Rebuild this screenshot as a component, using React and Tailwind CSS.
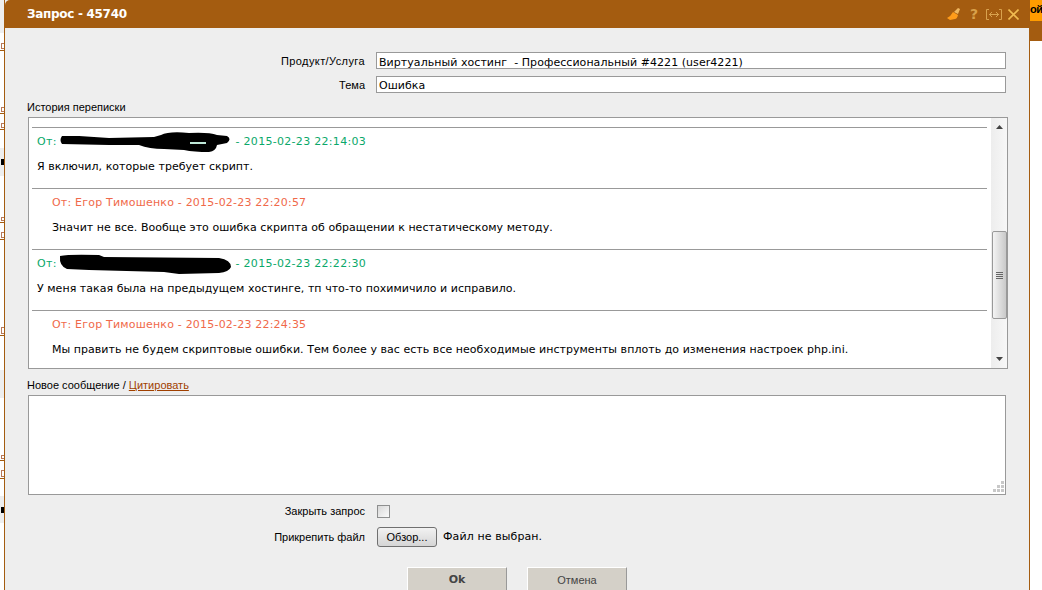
import React from 'react';

const verdana = { fontFamily: '"DejaVu Sans", sans-serif' };

// what peeks out from the page behind the dialog, top to bottom
const behind = [
  ['gray', 33], ['space', 10], ['link', 8], ['space', 56], ['link', 7], ['space', 9], ['link', 7], ['space', 18],
  ['mark', 28], ['space', 41], ['link', 6], ['space', 9], ['link', 8], ['space', 87], ['link', 9], ['space', 34],
  ['gray', 28], ['space', 57], ['link', 6], ['space', 9], ['link', 9], ['space', 17], ['mark', 27],
];

const BehindStrip = () => (
  <div className="w-[4px] shrink-0 flex flex-col">
    {behind.map(([kind, h], i) => {
      if (kind === 'link') {
        return (
          <div key={i} className="border-b border-[#a45c10] flex justify-end pb-[1px]" style={{ height: h }}>
            <span className="w-[3px] border-y border-l border-[#b8795a]" />
          </div>
        );
      }
      if (kind === 'mark') {
        return (
          <div key={i} className="bg-[#eeeeee] flex items-center justify-end" style={{ height: h }}>
            <span className="h-[6px] w-[3px] bg-black" />
          </div>
        );
      }
      return <div key={i} className={kind === 'gray' ? 'bg-[#eeeeee]' : 'bg-white'} style={{ height: h }} />;
    })}
  </div>
);

// scribbled-over sender names
const Scribble1 = () => (
  <svg width="173" height="20" viewBox="0 0 173 20" className="-ml-[1px] mr-[3px] shrink-0">
    <path d="M3 4 Q0 8 3 12 L50 13 L80 13 Q90 17 105 17 L125 18 Q135 20 150 20 Q157 19 158 13 L168 11 Q173 7 168 4 L158 3 Q150 0 130 1 Q110 -1 102 3 L95 5 L50 6 L20 4 Z" fill="#000" />
    <rect x="131" y="10" width="16" height="2" fill="#bfe8d8" />
  </svg>
);

const Scribble2 = () => (
  <svg width="173" height="20" viewBox="0 0 173 20" className="-ml-[1px] mr-[3px] shrink-0">
    <path d="M1 2 Q10 0 40 1 L45 3 L160 4 Q172 6 172 13 Q170 18 160 19 L120 20 L105 18 L30 16 L8 15 Q0 12 1 2 Z" fill="#000" />
  </svg>
);

const Message = ({ staff, from, date, text, scribble }) => (
  <div className="border-t border-[#999] h-[61px] shrink-0" style={verdana}>
    <div className={staff ? 'pl-5 text-[#f0694a]' : 'pl-[5px] text-[#0aa86a]'}>
      <div className={`flex items-center h-[28px] text-[11px] whitespace-pre ${staff ? 'tracking-[0.2px]' : 'tracking-[0.3px]'}`}>
        <span>От: </span>
        {scribble}
        <span>{from ? `${from} - ${date}` : `- ${date}`}</span>
      </div>
      <p className="mt-[4px] text-[11px] leading-[13px] tracking-[0.04px] text-black whitespace-pre">{text}</p>
    </div>
  </div>
);

const Row = ({ label, className, children }) => (
  <div className={`flex items-center ${className}`}>
    <label className="w-[337px] pt-[1px] text-right text-[11px] text-black">{label}</label>
    <div className="ml-[12px] flex-1 flex items-center">{children}</div>
  </div>
);

const Field = ({ value }) => (
  <div className="-ml-[1px] h-[17px] w-[630px] border border-[#999] bg-white flex items-center pl-[2px] pt-[4px] text-[11px] tracking-[0.05px] text-black whitespace-pre" style={verdana}>
    {value}
  </div>
);

const Scrollbar = () => (
  <div className="w-[16px] shrink-0 bg-gradient-to-r from-[#ededed] to-[#f7f7f7] flex flex-col items-center">
    <svg width="7" height="4" viewBox="0 0 7 4" className="mt-[7px]"><path d="M3.5 0 L7 4 H0 Z" fill="#444" /></svg>
    <div className="mt-[102px] h-[88px] w-[15px] border border-[#999] rounded-[2px] bg-gradient-to-r from-[#f4f4f4] to-[#c9c9c9] flex flex-col items-center justify-center gap-[1px]">
      <span className="h-[1px] w-[7px] bg-[#666]" />
      <span className="h-[1px] w-[7px] bg-[#666]" />
      <span className="h-[1px] w-[7px] bg-[#666]" />
      <span className="h-[1px] w-[7px] bg-[#666]" />
    </div>
    <svg width="7" height="4" viewBox="0 0 7 4" className="mt-[38px]"><path d="M0 0 H7 L3.5 4 Z" fill="#444" /></svg>
  </div>
);

const TitleIcons = () => (
  <div className="flex items-center pr-[10px]">
    <svg width="14" height="12" viewBox="0 0 14 12">
      <path d="M0 10 Q4 8 6 4 L11 7 Q10 11 8 11 L3 12 Z" fill="#ff9c1a" />
      <path d="M7 4 L11 0 L13 1 L11 6 Z" fill="#f0b860" />
    </svg>
    <span className="ml-[9px] w-[8px] text-center text-[14px] font-bold text-[#d8a04a] leading-none" style={verdana}>?</span>
    <svg width="16" height="11" viewBox="0 0 16 11" fill="none" stroke="#d9a24e" strokeWidth="1" className="ml-[8px]">
      <path d="M3 .5 H.5 V10.5 H3 M13 .5 H15.5 V10.5 H13 M3 5.5 H13 M6 3 L3.5 5.5 L6 8 M10 3 L12.5 5.5 L10 8" />
    </svg>
    <svg width="11" height="11" viewBox="0 0 11 11" fill="none" stroke="#f0bb50" strokeWidth="1.6" className="ml-[6px]">
      <path d="M.5 .5 L10.5 10.5 M10.5 .5 L.5 10.5" />
    </svg>
  </div>
);

export default function App() {
  return (
    <div className="flex h-[590px] w-[1042px] overflow-hidden bg-white" style={{ fontFamily: '"Liberation Sans", sans-serif' }}>
      <BehindStrip />

      <div className="w-[1026px] shrink-0 flex flex-col border-x border-[#a45c10] bg-[#eeeeee]">
        <div className="h-[28px] shrink-0 bg-[#a45c10] flex items-center justify-between pl-[22px] rounded-tl-[5px]">
          <span className="text-[12px] font-bold tracking-[-0.3px] text-white" style={verdana}>Запрос - 45740</span>
          <TitleIcons />
        </div>

        <div className="pl-[23px] flex flex-col">
          <Row className="mt-[24px]" label={<span className="tracking-[0.4px]">Продукт/Услуга</span>}><Field value="Виртуальный хостинг  - Профессиональный #4221 (user4221)" /></Row>
          <Row className="mt-[6px]" label="Тема"><Field value="Ошибка" /></Row>

          <div className="-ml-[1px] mt-[5px] h-[19px] text-[11px] leading-[18px] text-black">История переписки</div>
          <div className="h-[252px] w-[980px] border border-[#999] bg-white flex overflow-hidden">
            <div className="flex-1 pl-[3px] pr-[4px] pt-[9px] flex flex-col overflow-hidden">
              <Message from="" date="2015-02-23 22:14:03" text="Я включил, которые требует скрипт." scribble={<Scribble1 />} />
              <Message staff from="Егор Тимошенко" date="2015-02-23 22:20:57" text="Значит не все. Вообще это ошибка скрипта об обращении к нестатическому методу." />
              <Message from="" date="2015-02-23 22:22:30" text="У меня такая была на предыдущем хостинге, тп что-то похимичило и исправило." scribble={<Scribble2 />} />
              <Message staff from="Егор Тимошенко" date="2015-02-23 22:24:35" text="Мы править не будем скриптовые ошибки. Тем более у вас есть все необходимые инструменты вплоть до изменения настроек php.ini." />
            </div>
            <Scrollbar />
          </div>

          <div className="-ml-[1px] mt-[8px] mb-[1px] h-[17px] text-[11px] leading-[17px] text-black">
            Новое сообщение / <a className="text-[#a04000] underline">Цитировать</a>
          </div>
          <div className="relative h-[100px] w-[978px] border border-[#999] bg-white">
            <svg width="12" height="12" viewBox="0 0 12 12" className="absolute right-[1px] bottom-[1px]" fill="#c8c8c8">
              <rect x="9" y="0" width="3" height="3" /><rect x="5" y="4" width="3" height="3" /><rect x="9" y="4" width="3" height="3" />
              <rect x="1" y="8" width="3" height="3" /><rect x="5" y="8" width="3" height="3" /><rect x="9" y="8" width="3" height="3" />
            </svg>
          </div>

          <Row className="mt-[10px] h-[12px]" label="Закрыть запрос">
            <span className="h-[13px] w-[13px] border border-[#8e8f8f] bg-gradient-to-br from-[#d8d8d8] to-[#fafafa]" />
          </Row>
          <Row className="mt-[10px] h-[20px]" label="Прикрепить файл">
            <button className="h-[20px] w-[60px] border border-[#707070] rounded-[3px] bg-gradient-to-b from-[#f2f2f2] to-[#d5d5d5] text-[11px] text-black">Обзор...</button>
            <span className="ml-[6px] pt-[1px] text-[11px] tracking-[0.1px] text-black" style={verdana}>Файл не выбран.</span>
          </Row>

          <div className="mt-[20px] pl-[379px] flex gap-[20px]">
            <button className="h-[26px] w-[100px] bg-[#d4d0c8] border-t border-l border-white border-r border-r-[#999] text-[11px] font-bold text-[#444]" style={verdana}>Ok</button>
            <button className="h-[26px] w-[100px] bg-[#d4d0c8] border-t border-l border-white border-r border-r-[#999] text-[11px] text-[#444]">Отмена</button>
          </div>
        </div>
      </div>

      <div className="flex-1 flex flex-col">
        <div className="h-[21px] bg-[#ff9c00] text-[11px] tracking-[-0.5px] font-bold text-black leading-[18px]">ой</div>
        <div className="h-[20px] bg-[#a45c10]" />
      </div>
    </div>
  );
}
